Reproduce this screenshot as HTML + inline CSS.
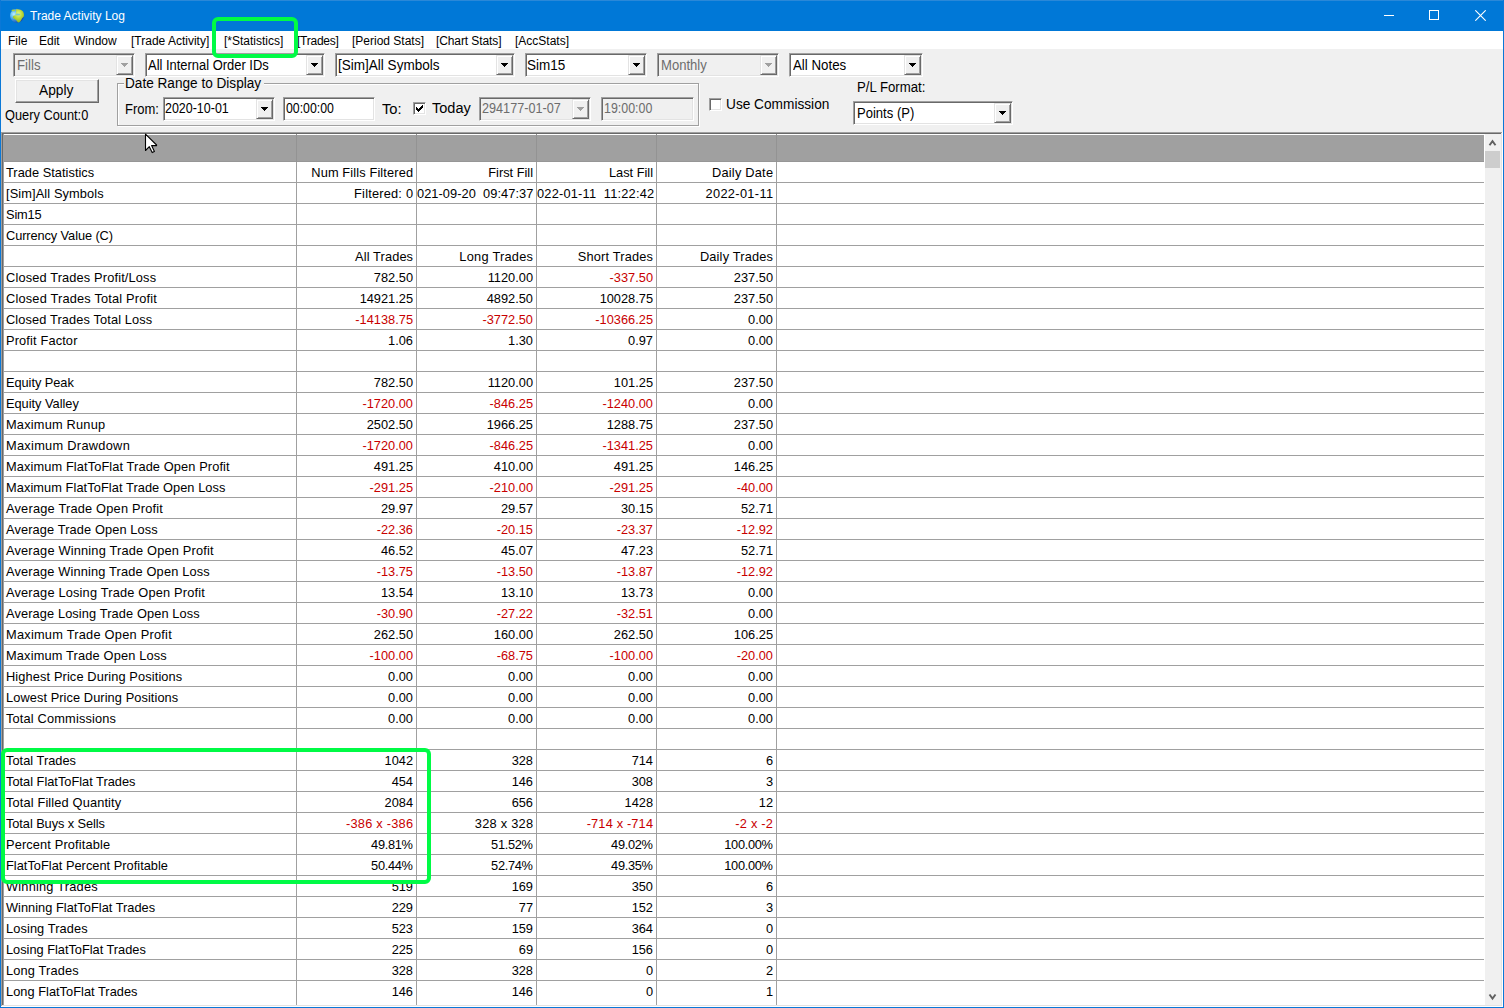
<!DOCTYPE html>
<html><head><meta charset="utf-8">
<style>
*{margin:0;padding:0;box-sizing:border-box}
html,body{width:1504px;height:1008px;overflow:hidden;background:#f0f0f0;font-family:"Liberation Sans",sans-serif;color:#000}
.a{position:absolute}
#frame{position:absolute;left:0;top:0;width:1504px;height:1008px;border:1px solid #0a78d7;border-top:none;pointer-events:none;z-index:50}
#title{position:absolute;left:0;top:0;width:1504px;height:31px;background:#0078d7;border-top:1px solid #2a88d8}
#title .t{position:absolute;left:30px;top:8px;font-size:12px;color:#fff;line-height:14px}
#menu{position:absolute;left:1px;top:31px;width:1502px;height:18px;background:#fff}
#menu span{position:absolute;top:3px;font-size:12px;line-height:15px;color:#000}
.tb{font-size:14px;line-height:20px;position:absolute;white-space:nowrap;transform-origin:0 0;z-index:30}
.sunk{position:absolute;border:1px solid;border-color:#a0a0a0 #fff #fff #a0a0a0;box-shadow:inset 1px 1px 0 #696969,inset -1px -1px 0 #e3e3e3;background:#fff}
.sunk.dis{background:#f0f0f0}
.sunk .txt{position:absolute;left:3px;top:4px;font-size:13px;line-height:15px;white-space:nowrap}
.sunk.dis .txt{color:#6d6d6d}
.dd{position:absolute;right:1px;top:1px;bottom:1px;width:17px;background:#f0f0f0;border:1px solid;border-color:#e3e3e3 #696969 #696969 #e3e3e3;box-shadow:inset 1px 1px 0 #fff,inset -1px -1px 0 #a0a0a0}
.dd svg{position:absolute;left:4px;top:7px}
.dis .dd path{fill:#a0a0a0}
.btn{position:absolute;background:#f0f0f0;border:1px solid;border-color:#fff #696969 #696969 #fff;box-shadow:inset -1px -1px 0 #a0a0a0,inset 1px 1px 0 #e3e3e3}
.chk{position:absolute;width:13px;height:13px;background:#fff;border:1px solid;border-color:#a0a0a0 #fff #fff #a0a0a0;box-shadow:inset 1px 1px 0 #696969,inset -1px -1px 0 #e3e3e3}
.grp{position:absolute;border:1px solid #a0a0a0;box-shadow:inset 1px 1px 0 #fff,1px 1px 0 #fff}
#grid{position:absolute;left:3px;top:134px;width:1498px;height:871px;background:#fff;overflow:hidden}
.hdr{position:absolute;left:0;top:1px;width:1481px;height:27px;background:#a0a0a0}
.hl{position:absolute;left:4px;width:1480px;height:1px;background:#a0a0a0}
.vl{position:absolute;top:162px;width:1px;height:843px;background:#a0a0a0}
.vh{position:absolute;top:134px;width:1px;height:28px;background:#939393}
.gl{position:absolute;left:6px;height:20px;font-size:12.8px;line-height:20px;white-space:nowrap;margin-top:1px}
.gr{position:absolute;height:20px;font-size:12.8px;line-height:20px;white-space:nowrap;text-align:right;margin-top:1px}
.red{color:#c80000}
.green{position:absolute;border:4px solid #00fb45;border-radius:6px;z-index:40}
</style></head><body>
<div id="title">
  <svg class="a" style="left:9px;top:5.5px" width="17" height="17" viewBox="0 0 17 17">
    <defs><radialGradient id="gb" cx="0.28" cy="0.38" r="0.75"><stop offset="0" stop-color="#bff0ff"/><stop offset="0.35" stop-color="#5ab8f0"/><stop offset="0.8" stop-color="#2060c0"/><stop offset="1" stop-color="#1848a0"/></radialGradient>
    <radialGradient id="gg" cx="0.5" cy="0.35" r="0.7"><stop offset="0" stop-color="#e6f880"/><stop offset="0.5" stop-color="#b8d838"/><stop offset="1" stop-color="#88b020"/></radialGradient></defs>
    <circle cx="8" cy="8.8" r="7" fill="url(#gb)"/>
    <path d="M7 2.3 C9 1.8 12.5 2.5 14 4.5 C15 6 15.2 8 14.8 9.5 C14 10.5 13 11 12.7 12 C12 13.5 11 15 9.7 15.6 C8.5 15.3 7.5 13.5 6.5 12.5 C5 11.8 3.8 11 3.8 10 C4 8.8 5.5 8.5 6.5 8.6 L6.8 6.5 C7.5 5 7 3.5 7 2.3Z" fill="url(#gg)"/>
    <ellipse cx="8.9" cy="7.5" rx="2.2" ry="1" fill="#7cc8c8"/>
    <ellipse cx="4.4" cy="3.4" rx="1.9" ry="0.9" fill="#b0d040"/>
  </svg>
  <div class="t">Trade Activity Log</div>
  <div class="a" style="left:1384px;top:14px;width:10px;height:1px;background:#fff"></div>
  <div class="a" style="left:1429px;top:9px;width:10px;height:10px;border:1px solid #fff"></div>
  <svg class="a" style="left:1475px;top:9px" width="11" height="11" viewBox="0 0 11 11"><path d="M0.3 0.3 L10.7 10.7 M10.7 0.3 L0.3 10.7" stroke="#fff" stroke-width="1.1"/></svg>
</div>
<div id="menu">
  <span style="left:7px">File</span>
  <span style="left:38px">Edit</span>
  <span style="left:73px">Window</span>
  <span style="left:130px">[Trade Activity]</span>
  <span style="left:223px">[*Statistics]</span>
  <span style="left:296px;letter-spacing:-0.25px">[Trades]</span>
  <span style="left:351px">[Period Stats]</span>
  <span style="left:435px;letter-spacing:-0.1px">[Chart Stats]</span>
  <span style="left:514px">[AccStats]</span>
</div>

<!-- toolbar row 1 -->
<div class="sunk dis" style="left:13px;top:53px;width:122px;height:24px"><div class="dd"><svg width="7" height="4" viewBox="0 0 7 4" shape-rendering="crispEdges"><path d="M0 0h7v1h-7z M1 1h5v1h-5z M2 2h3v1h-3z M3 3h1v1h-1z" fill="#000"/></svg></div></div>
<div class="sunk" style="left:145px;top:53px;width:180px;height:24px"><div class="dd"><svg width="7" height="4" viewBox="0 0 7 4" shape-rendering="crispEdges"><path d="M0 0h7v1h-7z M1 1h5v1h-5z M2 2h3v1h-3z M3 3h1v1h-1z" fill="#000"/></svg></div></div>
<div class="sunk" style="left:335px;top:53px;width:180px;height:24px"><div class="dd"><svg width="7" height="4" viewBox="0 0 7 4" shape-rendering="crispEdges"><path d="M0 0h7v1h-7z M1 1h5v1h-5z M2 2h3v1h-3z M3 3h1v1h-1z" fill="#000"/></svg></div></div>
<div class="sunk" style="left:525px;top:53px;width:122px;height:24px"><div class="dd"><svg width="7" height="4" viewBox="0 0 7 4" shape-rendering="crispEdges"><path d="M0 0h7v1h-7z M1 1h5v1h-5z M2 2h3v1h-3z M3 3h1v1h-1z" fill="#000"/></svg></div></div>
<div class="sunk dis" style="left:657px;top:53px;width:122px;height:24px"><div class="dd"><svg width="7" height="4" viewBox="0 0 7 4" shape-rendering="crispEdges"><path d="M0 0h7v1h-7z M1 1h5v1h-5z M2 2h3v1h-3z M3 3h1v1h-1z" fill="#000"/></svg></div></div>
<div class="sunk" style="left:789px;top:53px;width:134px;height:24px"><div class="dd"><svg width="7" height="4" viewBox="0 0 7 4" shape-rendering="crispEdges"><path d="M0 0h7v1h-7z M1 1h5v1h-5z M2 2h3v1h-3z M3 3h1v1h-1z" fill="#000"/></svg></div></div>

<!-- toolbar row 2 -->
<div class="btn" style="left:15px;top:79px;width:84px;height:24px"></div>
<div class="grp" style="left:117px;top:83px;width:582px;height:43px"></div>
<div class="a" style="left:124px;top:82px;width:140px;height:4px;background:#f0f0f0"></div>
<div class="sunk" style="left:163px;top:97px;width:112px;height:24px"><div class="dd"><svg width="7" height="4" viewBox="0 0 7 4" shape-rendering="crispEdges"><path d="M0 0h7v1h-7z M1 1h5v1h-5z M2 2h3v1h-3z M3 3h1v1h-1z" fill="#000"/></svg></div></div>
<div class="sunk" style="left:283px;top:97px;width:92px;height:24px"></div>
<div class="chk" style="left:413px;top:102px"><svg class="a" style="left:1px;top:1px" width="10" height="10" viewBox="0 0 10 10" shape-rendering="crispEdges"><path d="M1 3h1v3h-1z M2 4h1v3h-1z M3 5h1v3h-1z M4 4h1v3h-1z M5 3h1v3h-1z M6 2h1v3h-1z M7 1h1v3h-1z" fill="#000"/></svg></div>
<div class="sunk dis" style="left:479px;top:97px;width:112px;height:24px"><div class="dd"><svg width="7" height="4" viewBox="0 0 7 4" shape-rendering="crispEdges"><path d="M0 0h7v1h-7z M1 1h5v1h-5z M2 2h3v1h-3z M3 3h1v1h-1z" fill="#000"/></svg></div></div>
<div class="sunk dis" style="left:601px;top:97px;width:93px;height:24px"></div>
<div class="chk" style="left:709px;top:98px"></div>
<div class="sunk" style="left:853px;top:101px;width:160px;height:24px"><div class="dd"><svg width="7" height="4" viewBox="0 0 7 4" shape-rendering="crispEdges"><path d="M0 0h7v1h-7z M1 1h5v1h-5z M2 2h3v1h-3z M3 3h1v1h-1z" fill="#000"/></svg></div></div>

<!-- grid border -->
<div class="a" style="left:1px;top:132px;width:1501px;height:1px;background:#a0a0a0"></div>
<div class="a" style="left:1px;top:132px;width:1px;height:875px;background:#a0a0a0"></div>
<div class="a" style="left:2px;top:133px;width:1499px;height:1px;background:#696969"></div>
<div class="a" style="left:2px;top:133px;width:1px;height:873px;background:#696969"></div>
<div class="a" style="left:2px;top:1005px;width:1500px;height:1px;background:#e3e3e3"></div>
<div class="a" style="left:1501px;top:133px;width:1px;height:873px;background:#e3e3e3"></div>
<div class="a" style="left:1px;top:1006px;width:1502px;height:1px;background:#fff"></div>
<div class="a" style="left:1502px;top:132px;width:1px;height:875px;background:#fff"></div>

<div id="grid">
  <div class="a" style="left:0;top:0;width:1px;height:871px;background:#a0a0a0"></div>
  <div class="hdr"></div><div class="a" style="left:1px;top:27px;width:1480px;height:1px;background:#969696"></div>
</div>
<div id="gridc" class="a" style="left:0;top:0;width:1504px;height:1005px;overflow:hidden">
<div class="hl" style="top:182px"></div><div class="hl" style="top:203px"></div><div class="hl" style="top:224px"></div><div class="hl" style="top:245px"></div><div class="hl" style="top:266px"></div><div class="hl" style="top:287px"></div><div class="hl" style="top:308px"></div><div class="hl" style="top:329px"></div><div class="hl" style="top:350px"></div><div class="hl" style="top:371px"></div><div class="hl" style="top:392px"></div><div class="hl" style="top:413px"></div><div class="hl" style="top:434px"></div><div class="hl" style="top:455px"></div><div class="hl" style="top:476px"></div><div class="hl" style="top:497px"></div><div class="hl" style="top:518px"></div><div class="hl" style="top:539px"></div><div class="hl" style="top:560px"></div><div class="hl" style="top:581px"></div><div class="hl" style="top:602px"></div><div class="hl" style="top:623px"></div><div class="hl" style="top:644px"></div><div class="hl" style="top:665px"></div><div class="hl" style="top:686px"></div><div class="hl" style="top:707px"></div><div class="hl" style="top:728px"></div><div class="hl" style="top:749px"></div><div class="hl" style="top:770px"></div><div class="hl" style="top:791px"></div><div class="hl" style="top:812px"></div><div class="hl" style="top:833px"></div><div class="hl" style="top:854px"></div><div class="hl" style="top:875px"></div><div class="hl" style="top:896px"></div><div class="hl" style="top:917px"></div><div class="hl" style="top:938px"></div><div class="hl" style="top:959px"></div><div class="hl" style="top:980px"></div>
<div class="vl" style="left:296px"></div><div class="vh" style="left:296px"></div><div class="vl" style="left:416px"></div><div class="vh" style="left:416px"></div><div class="vl" style="left:536px"></div><div class="vh" style="left:536px"></div><div class="vl" style="left:656px"></div><div class="vh" style="left:656px"></div><div class="vl" style="left:776px"></div><div class="vh" style="left:776px"></div>
<div class="gl" style="top:162px;letter-spacing:0.033px">Trade Statistics</div><div class="gr" style="top:162px;right:1090.87px;letter-spacing:0.129px">Num Fills Filtered</div><div class="gr" style="top:162px;right:971.00px">First Fill</div><div class="gr" style="top:162px;right:851.00px">Last Fill</div><div class="gr" style="top:162px;right:730.78px;letter-spacing:0.222px">Daily Date</div>
<div class="gl" style="top:183px;letter-spacing:0.107px">[Sim]All Symbols</div><div class="gr" style="top:183px;right:1090.80px;letter-spacing:0.200px">Filtered: 0</div><div class="gl" style="left:417px;top:183px;letter-spacing:0.06px">021-09-20&nbsp;&nbsp;09:47:37</div><div class="gl" style="left:537px;top:183px;letter-spacing:0.21px">022-01-11&nbsp;&nbsp;11:22:42</div><div class="gr" style="top:183px;right:730.67px;letter-spacing:0.333px">2022-01-11</div>
<div class="gl" style="top:204px;letter-spacing:-0.150px">Sim15</div>
<div class="gl" style="top:225px;letter-spacing:-0.094px">Currency Value (C)</div>
<div class="gr" style="top:246px;right:1090.89px;letter-spacing:0.111px">All Trades</div><div class="gr" style="top:246px;right:970.75px;letter-spacing:0.250px">Long Trades</div><div class="gr" style="top:246px;right:850.82px;letter-spacing:0.182px">Short Trades</div><div class="gr" style="top:246px;right:730.82px;letter-spacing:0.182px">Daily Trades</div>
<div class="gl" style="top:267px;letter-spacing:0.146px">Closed Trades Profit/Loss</div><div class="gr" style="top:267px;right:1091.00px">782.50</div><div class="gr" style="top:267px;right:971.00px">1120.00</div><div class="gr red" style="top:267px;right:851.00px">-337.50</div><div class="gr" style="top:267px;right:731.00px">237.50</div>
<div class="gl" style="top:288px;letter-spacing:0.184px">Closed Trades Total Profit</div><div class="gr" style="top:288px;right:1091.00px">14921.25</div><div class="gr" style="top:288px;right:971.00px">4892.50</div><div class="gr" style="top:288px;right:851.00px">10028.75</div><div class="gr" style="top:288px;right:731.00px">237.50</div>
<div class="gl" style="top:309px;letter-spacing:0.122px">Closed Trades Total Loss</div><div class="gr red" style="top:309px;right:1091.00px">-14138.75</div><div class="gr red" style="top:309px;right:971.00px">-3772.50</div><div class="gr red" style="top:309px;right:851.00px">-10366.25</div><div class="gr" style="top:309px;right:731.00px">0.00</div>
<div class="gl" style="top:330px;letter-spacing:0.142px">Profit Factor</div><div class="gr" style="top:330px;right:1091.00px">1.06</div><div class="gr" style="top:330px;right:971.00px">1.30</div><div class="gr" style="top:330px;right:851.00px">0.97</div><div class="gr" style="top:330px;right:731.00px">0.00</div>

<div class="gl" style="top:372px;letter-spacing:-0.050px">Equity Peak</div><div class="gr" style="top:372px;right:1091.00px">782.50</div><div class="gr" style="top:372px;right:971.00px">1120.00</div><div class="gr" style="top:372px;right:851.00px">101.25</div><div class="gr" style="top:372px;right:731.00px">237.50</div>
<div class="gl" style="top:393px;letter-spacing:-0.017px">Equity Valley</div><div class="gr red" style="top:393px;right:1091.00px">-1720.00</div><div class="gr red" style="top:393px;right:971.00px">-846.25</div><div class="gr red" style="top:393px;right:851.00px">-1240.00</div><div class="gr" style="top:393px;right:731.00px">0.00</div>
<div class="gl" style="top:414px;letter-spacing:0.200px">Maximum Runup</div><div class="gr" style="top:414px;right:1091.00px">2502.50</div><div class="gr" style="top:414px;right:971.00px">1966.25</div><div class="gr" style="top:414px;right:851.00px">1288.75</div><div class="gr" style="top:414px;right:731.00px">237.50</div>
<div class="gl" style="top:435px;letter-spacing:0.287px">Maximum Drawdown</div><div class="gr red" style="top:435px;right:1091.00px">-1720.00</div><div class="gr red" style="top:435px;right:971.00px">-846.25</div><div class="gr red" style="top:435px;right:851.00px">-1341.25</div><div class="gr" style="top:435px;right:731.00px">0.00</div>
<div class="gl" style="top:456px;letter-spacing:0.109px">Maximum FlatToFlat Trade Open Profit</div><div class="gr" style="top:456px;right:1091.00px">491.25</div><div class="gr" style="top:456px;right:971.00px">410.00</div><div class="gr" style="top:456px;right:851.00px">491.25</div><div class="gr" style="top:456px;right:731.00px">146.25</div>
<div class="gl" style="top:477px;letter-spacing:0.076px">Maximum FlatToFlat Trade Open Loss</div><div class="gr red" style="top:477px;right:1091.00px">-291.25</div><div class="gr red" style="top:477px;right:971.00px">-210.00</div><div class="gr red" style="top:477px;right:851.00px">-291.25</div><div class="gr red" style="top:477px;right:731.00px">-40.00</div>
<div class="gl" style="top:498px;letter-spacing:0.204px">Average Trade Open Profit</div><div class="gr" style="top:498px;right:1091.00px">29.97</div><div class="gr" style="top:498px;right:971.00px">29.57</div><div class="gr" style="top:498px;right:851.00px">30.15</div><div class="gr" style="top:498px;right:731.00px">52.71</div>
<div class="gl" style="top:519px;letter-spacing:0.118px">Average Trade Open Loss</div><div class="gr red" style="top:519px;right:1091.00px">-22.36</div><div class="gr red" style="top:519px;right:971.00px">-20.15</div><div class="gr red" style="top:519px;right:851.00px">-23.37</div><div class="gr red" style="top:519px;right:731.00px">-12.92</div>
<div class="gl" style="top:540px;letter-spacing:0.181px">Average Winning Trade Open Profit</div><div class="gr" style="top:540px;right:1091.00px">46.52</div><div class="gr" style="top:540px;right:971.00px">45.07</div><div class="gr" style="top:540px;right:851.00px">47.23</div><div class="gr" style="top:540px;right:731.00px">52.71</div>
<div class="gl" style="top:561px;letter-spacing:0.157px">Average Winning Trade Open Loss</div><div class="gr red" style="top:561px;right:1091.00px">-13.75</div><div class="gr red" style="top:561px;right:971.00px">-13.50</div><div class="gr red" style="top:561px;right:851.00px">-13.87</div><div class="gr red" style="top:561px;right:731.00px">-12.92</div>
<div class="gl" style="top:582px;letter-spacing:0.177px">Average Losing Trade Open Profit</div><div class="gr" style="top:582px;right:1091.00px">13.54</div><div class="gr" style="top:582px;right:971.00px">13.10</div><div class="gr" style="top:582px;right:851.00px">13.73</div><div class="gr" style="top:582px;right:731.00px">0.00</div>
<div class="gl" style="top:603px;letter-spacing:0.114px">Average Losing Trade Open Loss</div><div class="gr red" style="top:603px;right:1091.00px">-30.90</div><div class="gr red" style="top:603px;right:971.00px">-27.22</div><div class="gr red" style="top:603px;right:851.00px">-32.51</div><div class="gr" style="top:603px;right:731.00px">0.00</div>
<div class="gl" style="top:624px;letter-spacing:0.237px">Maximum Trade Open Profit</div><div class="gr" style="top:624px;right:1091.00px">262.50</div><div class="gr" style="top:624px;right:971.00px">160.00</div><div class="gr" style="top:624px;right:851.00px">262.50</div><div class="gr" style="top:624px;right:731.00px">106.25</div>
<div class="gl" style="top:645px;letter-spacing:0.159px">Maximum Trade Open Loss</div><div class="gr red" style="top:645px;right:1091.00px">-100.00</div><div class="gr red" style="top:645px;right:971.00px">-68.75</div><div class="gr red" style="top:645px;right:851.00px">-100.00</div><div class="gr red" style="top:645px;right:731.00px">-20.00</div>
<div class="gl" style="top:666px;letter-spacing:0.117px">Highest Price During Positions</div><div class="gr" style="top:666px;right:1091.00px">0.00</div><div class="gr" style="top:666px;right:971.00px">0.00</div><div class="gr" style="top:666px;right:851.00px">0.00</div><div class="gr" style="top:666px;right:731.00px">0.00</div>
<div class="gl" style="top:687px;letter-spacing:0.079px">Lowest Price During Positions</div><div class="gr" style="top:687px;right:1091.00px">0.00</div><div class="gr" style="top:687px;right:971.00px">0.00</div><div class="gr" style="top:687px;right:851.00px">0.00</div><div class="gr" style="top:687px;right:731.00px">0.00</div>
<div class="gl" style="top:708px;letter-spacing:0.162px">Total Commissions</div><div class="gr" style="top:708px;right:1091.00px">0.00</div><div class="gr" style="top:708px;right:971.00px">0.00</div><div class="gr" style="top:708px;right:851.00px">0.00</div><div class="gr" style="top:708px;right:731.00px">0.00</div>

<div class="gl" style="top:750px;letter-spacing:0.027px">Total Trades</div><div class="gr" style="top:750px;right:1091.00px">1042</div><div class="gr" style="top:750px;right:971.00px">328</div><div class="gr" style="top:750px;right:851.00px">714</div><div class="gr" style="top:750px;right:731.00px">6</div>
<div class="gl" style="top:771px">Total FlatToFlat Trades</div><div class="gr" style="top:771px;right:1091.00px">454</div><div class="gr" style="top:771px;right:971.00px">146</div><div class="gr" style="top:771px;right:851.00px">308</div><div class="gr" style="top:771px;right:731.00px">3</div>
<div class="gl" style="top:792px;letter-spacing:0.140px">Total Filled Quantity</div><div class="gr" style="top:792px;right:1091.00px">2084</div><div class="gr" style="top:792px;right:971.00px">656</div><div class="gr" style="top:792px;right:851.00px">1428</div><div class="gr" style="top:792px;right:731.00px">12</div>
<div class="gl" style="top:813px;letter-spacing:-0.076px">Total Buys x Sells</div><div class="gr red" style="top:813px;right:1090.77px;letter-spacing:0.230px">-386 x -386</div><div class="gr" style="top:813px;right:970.75px;letter-spacing:0.250px">328 x 328</div><div class="gr red" style="top:813px;right:850.84px;letter-spacing:0.160px">-714 x -714</div><div class="gr red" style="top:813px;right:730.75px;letter-spacing:0.250px">-2 x -2</div>
<div class="gl" style="top:834px;letter-spacing:0.135px">Percent Profitable</div><div class="gr" style="top:834px;right:1091.30px;letter-spacing:-0.300px">49.81%</div><div class="gr" style="top:834px;right:971.30px;letter-spacing:-0.300px">51.52%</div><div class="gr" style="top:834px;right:851.30px;letter-spacing:-0.300px">49.02%</div><div class="gr" style="top:834px;right:731.30px;letter-spacing:-0.300px">100.00%</div>
<div class="gl" style="top:855px;letter-spacing:0.018px">FlatToFlat Percent Profitable</div><div class="gr" style="top:855px;right:1091.30px;letter-spacing:-0.300px">50.44%</div><div class="gr" style="top:855px;right:971.30px;letter-spacing:-0.300px">52.74%</div><div class="gr" style="top:855px;right:851.30px;letter-spacing:-0.300px">49.35%</div><div class="gr" style="top:855px;right:731.30px;letter-spacing:-0.300px">100.00%</div>
<div class="gl" style="top:876px;letter-spacing:0.208px">Winning Trades</div><div class="gr" style="top:876px;right:1091.00px">519</div><div class="gr" style="top:876px;right:971.00px">169</div><div class="gr" style="top:876px;right:851.00px">350</div><div class="gr" style="top:876px;right:731.00px">6</div>
<div class="gl" style="top:897px;letter-spacing:0.021px">Winning FlatToFlat Trades</div><div class="gr" style="top:897px;right:1091.00px">229</div><div class="gr" style="top:897px;right:971.00px">77</div><div class="gr" style="top:897px;right:851.00px">152</div><div class="gr" style="top:897px;right:731.00px">3</div>
<div class="gl" style="top:918px;letter-spacing:0.100px">Losing Trades</div><div class="gr" style="top:918px;right:1091.00px">523</div><div class="gr" style="top:918px;right:971.00px">159</div><div class="gr" style="top:918px;right:851.00px">364</div><div class="gr" style="top:918px;right:731.00px">0</div>
<div class="gl" style="top:939px;letter-spacing:-0.013px">Losing FlatToFlat Trades</div><div class="gr" style="top:939px;right:1091.00px">225</div><div class="gr" style="top:939px;right:971.00px">69</div><div class="gr" style="top:939px;right:851.00px">156</div><div class="gr" style="top:939px;right:731.00px">0</div>
<div class="gl" style="top:960px;letter-spacing:0.140px">Long Trades</div><div class="gr" style="top:960px;right:1091.00px">328</div><div class="gr" style="top:960px;right:971.00px">328</div><div class="gr" style="top:960px;right:851.00px">0</div><div class="gr" style="top:960px;right:731.00px">2</div>
<div class="gl" style="top:981px;letter-spacing:0.029px">Long FlatToFlat Trades</div><div class="gr" style="top:981px;right:1091.00px">146</div><div class="gr" style="top:981px;right:971.00px">146</div><div class="gr" style="top:981px;right:851.00px">0</div><div class="gr" style="top:981px;right:731.00px">1</div>
</div>
<!-- scrollbar -->
<div class="a" style="left:1485px;top:134px;width:16px;height:871px;background:#f0f0f0"></div>
<div class="a" style="left:1485px;top:151px;width:15px;height:17px;background:#cdcdcd"></div>
<svg class="a" style="left:1488px;top:139px" width="9" height="8" viewBox="0 0 9 8"><path d="M1.5 6.3 L4.5 2.2 L7.5 6.3" stroke="#606060" stroke-width="1.9" fill="none"/></svg>
<svg class="a" style="left:1488px;top:993px" width="9" height="8" viewBox="0 0 9 8"><path d="M1.5 1.5 L4.5 5.6 L7.5 1.5" stroke="#606060" stroke-width="1.9" fill="none"/></svg>

<!-- cursor -->
<svg class="a" style="left:144px;top:133px;z-index:45" width="16" height="23" viewBox="0 0 16 23">
  <path d="M1.5 1.2 L1.5 17.5 L5.3 13.7 L8.2 19.6 L10.4 18.6 L7.6 12.6 L12.6 12.6 L12.6 12 Z" fill="#fff" stroke="#000" stroke-width="1.1" stroke-linejoin="round"/>
</svg>

<div class="green" style="left:212px;top:17px;width:86px;height:41px"></div>
<div class="green" style="left:1px;top:748px;width:430px;height:136px"></div>
<div class="tb" style="left:16.65px;top:55px;color:#6d6d6d;transform:scaleX(0.9458)">Fills</div><div class="tb" style="left:148.2px;top:55px;color:#000;transform:scaleX(0.9238)">All Internal Order IDs</div><div class="tb" style="left:337.83px;top:55px;color:#000;transform:scaleX(0.9663)">[Sim]All Symbols</div><div class="tb" style="left:527.24px;top:55px;color:#000;transform:scaleX(0.9632)">Sim15</div><div class="tb" style="left:660.57px;top:55px;color:#6d6d6d;transform:scaleX(0.9333)">Monthly</div><div class="tb" style="left:792.9px;top:55px;color:#000;transform:scaleX(0.95)">All Notes</div><div class="tb" style="left:39.1px;top:80px;color:#000;transform:scaleX(0.9829)">Apply</div><div class="tb" style="left:4.59px;top:105px;color:#000;transform:scaleX(0.9144)">Query Count:0</div><div class="tb" style="left:125.23px;top:73px;color:#000;transform:scaleX(0.9719)">Date Range to Display</div><div class="tb" style="left:124.67px;top:99px;color:#000;transform:scaleX(0.9286)">From:</div><div class="tb" style="left:165.11px;top:98px;color:#000;transform:scaleX(0.89)">2020-10-01</div><div class="tb" style="left:286.0px;top:98px;color:#000;transform:scaleX(0.8796)">00:00:00</div><div class="tb" style="left:381.6px;top:99px;color:#000;transform:scaleX(1.05)">To:</div><div class="tb" style="left:431.9px;top:98px;color:#000;transform:scaleX(1.0378)">Today</div><div class="tb" style="left:481.5px;top:98px;color:#6d6d6d;transform:scaleX(0.9035)">294177-01-07</div><div class="tb" style="left:603.91px;top:98px;color:#6d6d6d;transform:scaleX(0.8868)">19:00:00</div><div class="tb" style="left:726.32px;top:94px;color:#000;transform:scaleX(0.9769)">Use Commission</div><div class="tb" style="left:856.56px;top:77px;color:#000;transform:scaleX(0.9423)">P/L Format:</div><div class="tb" style="left:856.77px;top:103px;color:#000;transform:scaleX(0.9317)">Points (P)</div>
<div id="frame"></div>
</body></html>
